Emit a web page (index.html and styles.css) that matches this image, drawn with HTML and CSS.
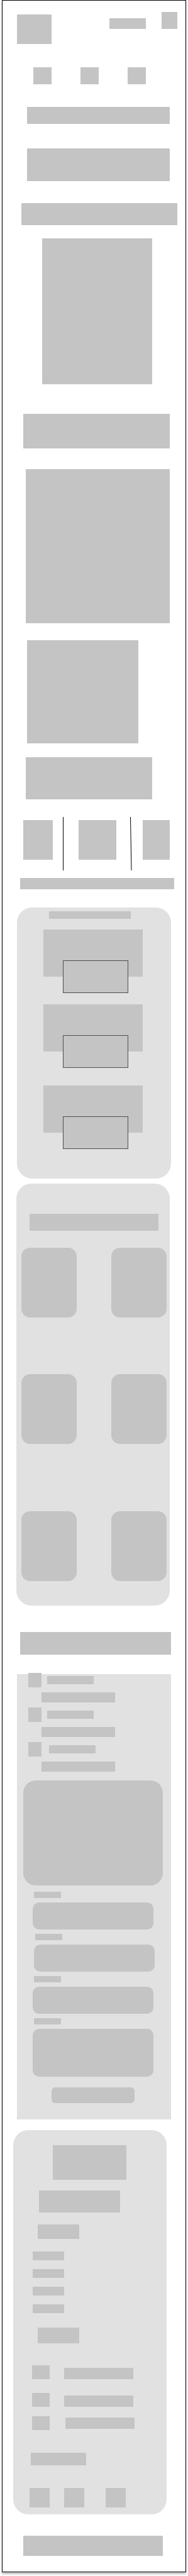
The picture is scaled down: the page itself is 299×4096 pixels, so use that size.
FILE: index.html
```html
<!DOCTYPE html>
<html lang="en">
<head>
<meta charset="utf-8">
<meta name="viewport" content="width=device-width, initial-scale=1">
<title>Wireframe</title>
<link rel="stylesheet" href="styles.css">
</head>
<body>
<div class="page">
  <header class="header">
    <a class="fill brand" href="#" aria-label="Home"></a>
    <div class="header-tools">
      <a class="fill header-link" href="#" aria-label="Account"></a>
      <button class="fill menu-button" type="button" aria-label="Menu"></button>
    </div>
  </header>
  <nav class="nav" aria-label="Main">
    <a class="fill nav-item" href="#" aria-label="First"></a>
    <a class="fill nav-item" href="#" aria-label="Second"></a>
    <a class="fill nav-item" href="#" aria-label="Third"></a>
  </nav>

  <main class="main">
    <div class="fill hero-title"></div>
    <div class="fill hero-text"></div>
    <div class="fill hero-banner"></div>
    <div class="fill portrait"></div>
    <div class="fill about-title"></div>
    <div class="fill about-picture"></div>
    <div class="fill about-side"></div>
    <div class="fill about-text"></div>

    <section class="stats">
      <div class="fill stat stat-first"></div>
      <svg class="divider" viewBox="0 0 3 85" aria-hidden="true"><path d="M.5 0V85" stroke="#000"/></svg>
      <div class="fill stat stat-middle"></div>
      <svg class="divider" viewBox="0 0 3 85" aria-hidden="true"><path d="M.5 0L2 85" stroke="#000"/></svg>
      <div class="fill stat stat-last"></div>
    </section>
    <div class="fill strip"></div>

    <section class="panel services">
      <div class="fill services-title"></div>
      <article class="service">
        <div class="fill service-photo"></div>
        <div class="fill service-caption"></div>
      </article>
      <article class="service">
        <div class="fill service-photo"></div>
        <div class="fill service-caption"></div>
      </article>
      <article class="service service-last">
        <div class="fill service-photo"></div>
        <div class="fill service-caption"></div>
      </article>
    </section>

    <section class="panel gallery">
      <div class="fill gallery-title"></div>
      <div class="tiles">
        <div class="fill tile"></div>
        <div class="fill tile"></div>
      </div>
      <div class="tiles tiles-second">
        <div class="fill tile"></div>
        <div class="fill tile"></div>
      </div>
      <div class="tiles tiles-third">
        <div class="fill tile"></div>
        <div class="fill tile"></div>
      </div>
    </section>

    <div class="fill contact-title"></div>

    <section class="panel contact">
      <ul class="details">
        <li class="detail">
          <div class="detail-head"><span class="fill detail-icon"></span><span class="fill detail-name"></span></div>
          <div class="fill detail-text"></div>
        </li>
        <li class="detail">
          <div class="detail-head"><span class="fill detail-icon"></span><span class="fill detail-name"></span></div>
          <div class="fill detail-text"></div>
        </li>
        <li class="detail">
          <div class="detail-head detail-head-wide"><span class="fill detail-icon"></span><span class="fill detail-name"></span></div>
          <div class="fill detail-text"></div>
        </li>
      </ul>
      <div class="fill map"></div>
      <form class="form">
        <div class="field">
          <label class="fill label" for="name"></label>
          <input class="fill control" id="name" type="text" aria-label="Name">
        </div>
        <div class="field field-inset">
          <label class="fill label" for="email"></label>
          <input class="fill control" id="email" type="email" aria-label="Email">
        </div>
        <div class="field">
          <label class="fill label" for="subject"></label>
          <input class="fill control" id="subject" type="text" aria-label="Subject">
        </div>
        <div class="field">
          <label class="fill label" for="message"></label>
          <textarea class="fill control control-tall" id="message" aria-label="Message"></textarea>
        </div>
        <button class="fill submit" type="button" aria-label="Send"></button>
      </form>
    </section>
  </main>

  <footer class="footer">
    <div class="panel footer-panel">
      <div class="fill footer-logo"></div>
      <div class="fill footer-text"></div>
      <div class="fill footer-title"></div>
      <nav class="links" aria-label="Footer">
        <a class="fill link" href="#" aria-label="First"></a>
        <a class="fill link" href="#" aria-label="Second"></a>
        <a class="fill link" href="#" aria-label="Third"></a>
        <a class="fill link" href="#" aria-label="Fourth"></a>
      </nav>
      <div class="fill footer-title footer-title-second"></div>
      <div class="reach"><span class="fill reach-icon"></span><span class="fill reach-text"></span></div>
      <div class="reach reach-second"><span class="fill reach-icon"></span><span class="fill reach-text"></span></div>
      <div class="reach reach-third"><span class="fill reach-icon"></span><span class="fill reach-text"></span></div>
      <div class="fill social-title"></div>
      <div class="socials">
        <a class="fill social" href="#" aria-label="Social one"></a>
        <a class="fill social" href="#" aria-label="Social two"></a>
        <a class="fill social social-last" href="#" aria-label="Social three"></a>
      </div>
    </div>
    <div class="fill copyright"></div>
  </footer>
</div>
</body>
</html>
```

FILE: styles.css
```css
* {
  box-sizing: border-box;
}

body {
  margin: 0;
  background: #fff;
  font-family: "Liberation Sans", Arial, sans-serif;
}

.page {
  display: flex;
  flex-direction: column;
  margin: 0 3px 6px;
  padding-bottom: 25px;
  border: 1px solid #000;
  background: #fff;
  box-shadow: 0 3px 3px rgba(0, 0, 0, 0.25);
}

.fill {
  display: block;
  padding: 0;
  border: 0;
  background: #c4c4c4;
}

.panel {
  display: flex;
  flex-direction: column;
  border-radius: 24px;
  background: #e1e1e1;
}

.main,
.footer {
  display: flex;
  flex-direction: column;
}

/* Header */
.header {
  display: flex;
  justify-content: space-between;
  padding: 18px 13px 0 23px;
}

.brand {
  width: 55px;
  height: 47px;
  margin-top: 4px;
}

.header-tools {
  display: flex;
  align-items: flex-end;
  align-self: flex-start;
  gap: 25px;
}

.header-link {
  width: 58px;
  height: 17px;
}

.menu-button {
  width: 25px;
  height: 27px;
}

.nav {
  display: flex;
  justify-content: space-between;
  margin-top: 37px;
  padding: 0 63px 0 49px;
}

.nav-item {
  width: 29px;
  height: 27px;
}

/* Intro */
.hero-title {
  height: 27px;
  margin: 36px 25px 0 39px;
}

.hero-text {
  height: 52px;
  margin: 39px 25px 0 39px;
}

.hero-banner {
  height: 35px;
  margin: 35px 13px 0 30px;
}

.portrait {
  height: 232px;
  margin: 21px 53px 0 63px;
}

.about-title {
  height: 55px;
  margin: 47px 25px 0 33px;
}

.about-picture {
  height: 245px;
  margin: 33px 25px 0 37px;
}

.about-side {
  height: 164px;
  margin: 27px 75px 0 39px;
}

.about-text {
  height: 67px;
  margin: 22px 53px 0 37px;
}

/* Stats */
.stats {
  display: flex;
  justify-content: space-between;
  height: 85px;
  margin: 28px 25px 0 33px;
}

.stat {
  height: 63px;
  margin-top: 5px;
}

.stat-first {
  width: 47px;
  margin-right: 16px;
}

.stat-middle {
  width: 60px;
  margin-right: 22px;
  margin-left: 22px;
}

.stat-last {
  width: 43px;
  margin-left: 17px;
}

.divider {
  flex: none;
  width: 3px;
  height: 85px;
}

.strip {
  height: 18px;
  margin: 12px 18px 0 28px;
}

/* Services */
.services {
  margin: 29px 23px 0;
  padding: 6px 45px 47px 42px;
}

.services-title {
  height: 12px;
  margin: 0 19px 0 9px;
}

.service {
  display: flex;
  flex-direction: column;
  margin-top: 18px;
}

.services-title + .service {
  margin-top: 17px;
}

.service-last {
  margin-top: 28px;
}

.service-photo {
  height: 75px;
}

.service-caption {
  height: 52px;
  margin: -26px 23px 0 31px;
  border: 1px solid #4f4f4f;
}

/* Gallery */
.gallery {
  margin: 8px 25px 0 22px;
  padding: 48px 5px 39px 8px;
}

.gallery-title {
  height: 27px;
  margin: 0 13px;
}

.tiles {
  display: flex;
  justify-content: space-between;
  margin-top: 27px;
}

.tiles-second {
  margin-top: 90px;
}

.tiles-third {
  margin-top: 107px;
}

.tile {
  width: 88px;
  height: 111px;
  border-radius: 14px;
}

/* Contact */
.contact-title {
  height: 36px;
  margin: 42px 23px 0 28px;
}

.contact {
  margin: 31px 23px 0;
  padding-bottom: 26px;
  border-radius: 0;
}

.details {
  display: flex;
  flex-direction: column;
  gap: 8px;
  margin: -2px 0 0;
  padding: 0 0 0 18px;
  list-style: none;
}

.detail-head {
  display: flex;
  align-items: center;
  gap: 9px;
}

.detail-head-wide {
  gap: 12px;
}

.detail-icon {
  width: 21px;
  height: 23px;
}

.detail-name {
  width: 74px;
  height: 13px;
}

.detail-text {
  width: 117px;
  height: 16px;
  margin: 8px 0 0 21px;
}

.map {
  height: 167px;
  margin: 14px 13px 0 10px;
  border-radius: 20px;
}

.form {
  display: flex;
  flex-direction: column;
  gap: 7px;
  margin: 10px 28px 0 25px;
}

.field {
  display: flex;
  flex-direction: column;
  gap: 7px;
}

.field-inset {
  margin: 0 -2px 0 2px;
}

.label {
  width: 43px;
  height: 10px;
  margin-left: 2px;
}

.control {
  width: 100%;
  height: 43px;
  padding: 0 10px;
  border-radius: 10px;
  font: 12px "Liberation Sans", Arial, sans-serif;
  resize: none;
}

.control-tall {
  height: 76px;
  padding: 10px;
}

.submit {
  height: 25px;
  margin: 10px 30px 0;
  border-radius: 6px;
}

/* Footer */
.footer-panel {
  margin: 17px 30px 0 17px;
  padding: 24px 0 11px;
}

.footer-logo {
  height: 55px;
  margin: 0 64px 0 63px;
}

.footer-text {
  height: 35px;
  margin: 17px 74px 0 41px;
}

.footer-title {
  width: 66px;
  height: 23px;
  margin: 19px 0 0 39px;
}

.footer-title-second {
  height: 25px;
  margin-top: 23px;
}

.links {
  display: flex;
  flex-direction: column;
  gap: 14px;
  margin: 20px 0 0 31px;
}

.link {
  width: 50px;
  height: 14px;
}

.reach {
  display: flex;
  align-items: flex-end;
  gap: 23px;
  margin: 35px 0 0 30px;
}

.reach-second {
  margin-top: 22px;
}

.reach-third {
  align-items: center;
  gap: 25px;
  margin-top: 15px;
}

.reach-icon {
  width: 28px;
  height: 22px;
}

.reach-text {
  width: 110px;
  height: 18px;
}

.social-title {
  width: 88px;
  height: 20px;
  margin: 36px 0 0 28px;
}

.socials {
  display: flex;
  gap: 23px;
  margin: 36px 0 0 26px;
}

.social {
  width: 32px;
  height: 31px;
}

.social-last {
  margin-left: 11px;
}

.copyright {
  height: 32px;
  margin: 34px 36px 0 33px;
}
```
